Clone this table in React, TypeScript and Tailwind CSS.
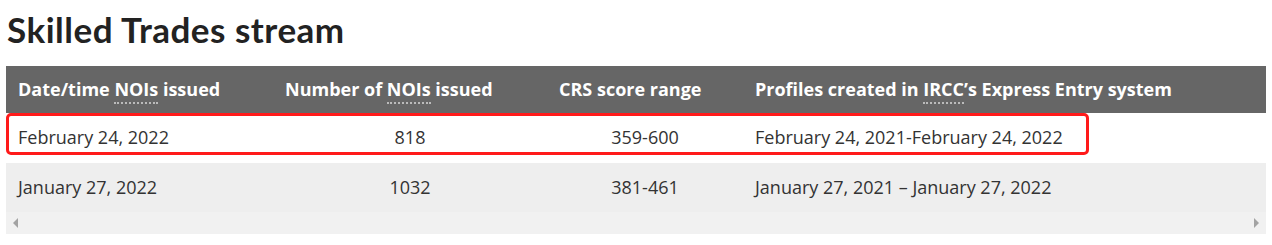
import { ReactNode } from 'react';

type Row = { date: string; count: string; range: string; profiles: string; highlight?: boolean };

const rows: Row[] = [
  {
    date: 'February 24, 2022',
    count: '818',
    range: '359-600',
    profiles: 'February 24, 2021-February 24, 2022',
    highlight: true,
  },
  {
    date: 'January 27, 2022',
    count: '1032',
    range: '381-461',
    profiles: 'January 27, 2021 – January 27, 2022',
  },
];

function Abbr({ children }: { children: ReactNode }) {
  return (
    <abbr className="no-underline border-b-2 border-dotted border-[#bbbbbb] pb-px">{children}</abbr>
  );
}

export default function App() {
  return (
    <div className="w-[1272px] h-[245px] bg-white overflow-hidden font-['Open_Sans',sans-serif] text-[#333]">
      {/* Title */}
      <h2 className="pl-[7px] pt-[9px] h-[66px] text-[35px] leading-[40px] tracking-[0.5px] font-bold text-[#222] font-['Lato',sans-serif]">
        Skilled Trades stream
      </h2>

      <div className="ml-[6px] w-[1260px]">
        {/* Header */}
        <div className="grid grid-cols-[267px_274px_196px_523px] h-[47px] items-center bg-[#666666] text-white text-[18px] font-bold">
          <div className="pl-3">
            Date/time <Abbr>NOIs</Abbr> issued
          </div>
          <div className="pl-3">
            Number of <Abbr>NOIs</Abbr> issued
          </div>
          <div className="pl-3">CRS score range</div>
          <div className="pl-3">
            Profiles created in <Abbr>IRCC</Abbr>’s Express Entry system
          </div>
        </div>

        {/* Rows */}
        {rows.map((r, i) => (
          <div
            key={i}
            className={`relative grid grid-cols-[267px_274px_196px_523px] h-[49px] items-center text-[18px] ${
              i % 2 === 1 ? 'bg-[#eeeeee] mt-px' : 'bg-white'
            }`}
          >
            <div className="pl-3">{r.date}</div>
            <div className="text-center">{r.count}</div>
            <div className="text-center">{r.range}</div>
            <div className="pl-3">{r.profiles}</div>
            {r.highlight && (
              <div className="absolute left-0 top-0 w-[1083px] h-[42px] border-[3px] border-[#ff1a1a] rounded-[5px] pointer-events-none" />
            )}
          </div>
        ))}

        {/* Scrollbar */}
        <div className="h-[22px] bg-[#f1f1f1] flex items-center justify-between px-[7px]">
          <span className="w-0 h-0 border-y-[5px] border-y-transparent border-r-[5px] border-r-[#a3a3a3]" />
          <span className="w-0 h-0 border-y-[5px] border-y-transparent border-l-[5px] border-l-[#a3a3a3]" />
        </div>
      </div>
    </div>
  );
}
